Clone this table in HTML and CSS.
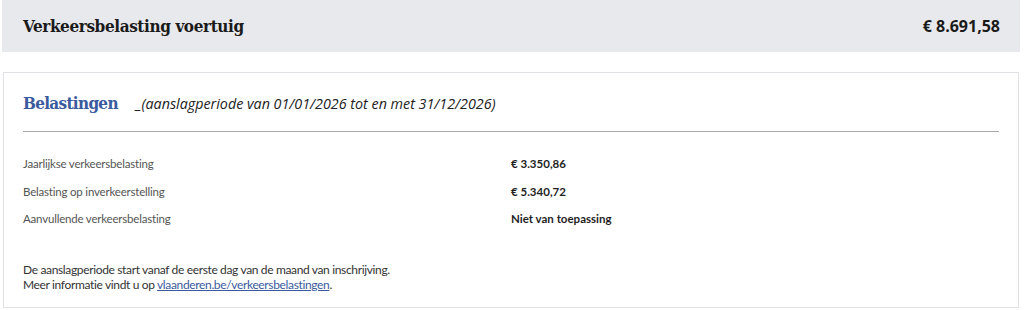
FILE: index.html
```html
<!DOCTYPE html>
<html lang="nl">
<head>
<meta charset="utf-8">
<title>Verkeersbelasting voertuig</title>
<link rel="stylesheet" href="styles.css">
</head>
<body>
<header class="topbar">
  <h1 class="topbar-title">Verkeersbelasting voertuig</h1>
  <div class="topbar-total">€ 8.691,58</div>
</header>
<section class="card">
  <div class="card-head">
    <h2 class="card-title">Belastingen</h2>
    <span class="card-sub">_(aanslagperiode van 01/01/2026 tot en met 31/12/2026)</span>
  </div>
  <dl class="rows">
    <dt class="label">Jaarlijkse verkeersbelasting</dt>
    <dd class="value">€ 3.350,86</dd>
    <dt class="label">Belasting op inverkeerstelling</dt>
    <dd class="value">€ 5.340,72</dd>
    <dt class="label">Aanvullende verkeersbelasting</dt>
    <dd class="value">Niet van toepassing</dd>
  </dl>
  <p class="note">De aanslagperiode start vanaf de eerste dag van de maand van inschrijving.<br>Meer informatie vindt u op <a href="#" class="link">vlaanderen.be/verkeersbelastingen</a>.</p>
</section>
</body>
</html>
```
FILE: styles.css
```css
* { box-sizing: border-box; }
body {
  margin: 0;
  background: #ffffff;
  font-family: Lato, "Open Sans", sans-serif;
  color: #333;
}
.topbar {
  margin: 0 4px 0 2px;
  height: 52px;
  background: #e8e9ec;
  display: flex;
  align-items: center;
  justify-content: space-between;
  padding: 0 20px 0 21px;
}
.topbar-title {
  margin: 0;
  font-family: "DejaVu Serif Condensed", "DejaVu Serif", serif;
  font-weight: bold;
  font-size: 17px;
  letter-spacing: -0.4px;
  color: #1a1a1a;
}
.topbar-total {
  font-family: "Open Sans", sans-serif;
  font-weight: 700;
  font-size: 16px;
  color: #1a1a1a;
}
.card {
  margin: 20px 5px 0 3px;
  height: 236px;
  border: 1px solid #e1e2e5;
  padding: 0 19px;
  display: flex;
  flex-direction: column;
}
.card-head {
  display: flex;
  align-items: baseline;
  gap: 18px;
  height: 59px;
  padding-top: 20px;
  border-bottom: 1px solid #a9a9a9;
}
.card-title {
  margin: 0;
  font-family: "DejaVu Serif Condensed", "DejaVu Serif", serif;
  font-weight: bold;
  font-size: 17px;
  letter-spacing: -0.7px;
  color: #3b5a9e;
}
.card-sub {
  font-family: "Open Sans", sans-serif;
  font-style: italic;
  font-size: 14.3px;
  color: #222;
}
.rows {
  margin: 23px 0 0 0;
  display: grid;
  grid-template-columns: 1fr 1fr;
  row-gap: 10px;
  font-size: 11.5px;
  line-height: 17.5px;
}
.label { margin: 0; color: #555; letter-spacing: -0.2px; }
.value { margin: 0; color: #1f1f1f; font-weight: 700; }
.note {
  margin: 34px 0 0 0;
  font-size: 12px;
  line-height: 15px;
  letter-spacing: -0.35px;
  color: #333;
}
.link { color: #3b5a9e; text-decoration: underline; }
```
